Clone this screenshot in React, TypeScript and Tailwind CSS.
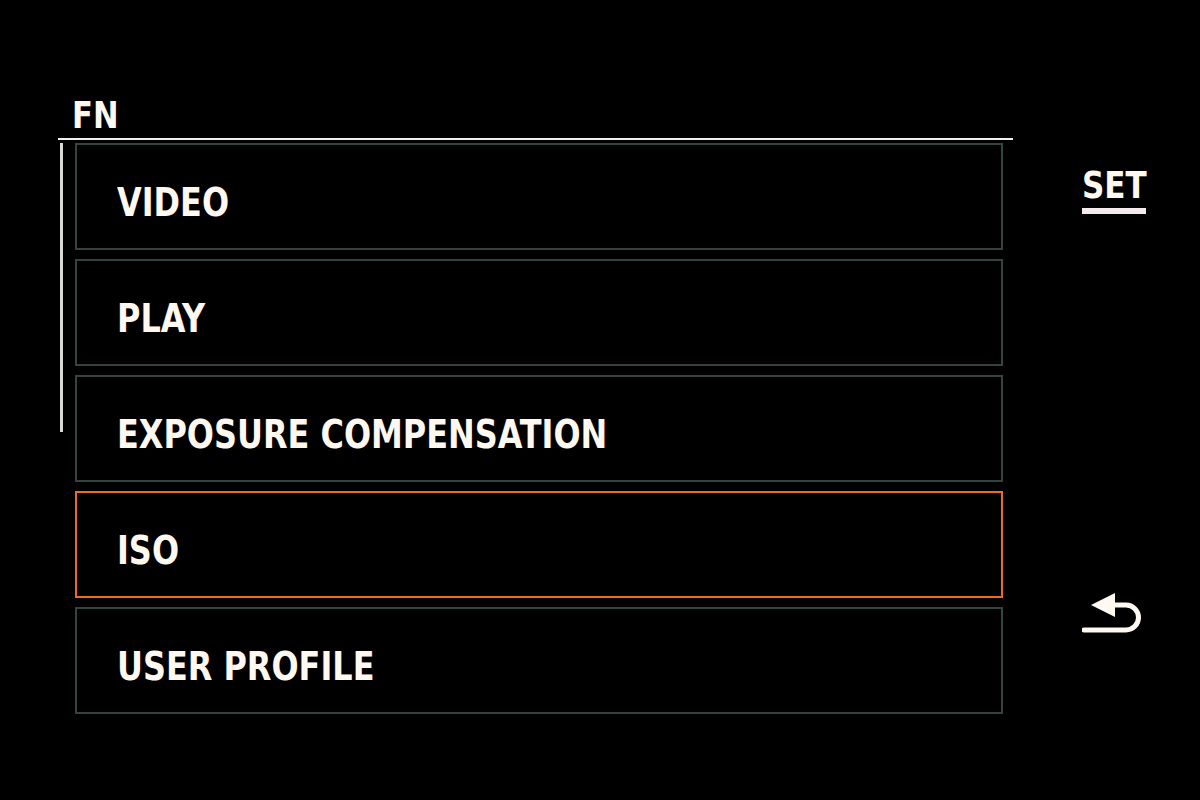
const items = [
  { label: "VIDEO", active: false },
  { label: "PLAY", active: false },
  { label: "EXPOSURE COMPENSATION", active: false },
  { label: "ISO", active: true },
  { label: "USER PROFILE", active: false },
];

function BackIcon() {
  return (
    <svg width="60" height="48" viewBox="0 0 60 48" fill="none">
      <path d="M9 12 L33 0 L33 24 Z" fill="#fff9f2" />
      <path d="M30 12 H44 A12.5 12.5 0 0 1 44 37 H2" stroke="#fff9f2" strokeWidth="5" strokeLinecap="round" />
    </svg>
  );
}

export default function App() {
  return (
    <div className="w-[1200px] h-[800px] bg-black flex overflow-hidden font-['DejaVu_Sans_Condensed','DejaVu_Sans',sans-serif] font-bold text-[#fff8f0]">
      <div className="ml-[58px] w-[955px] pt-[94px]">
        <div className="pl-[14px] text-[34px] leading-[42px]">
          <span className="inline-block scale-y-[1.12]">FN</span>
        </div>
        <div className="h-[2px] bg-[#eef2ee] mt-[2px]" />
        <div className="flex mt-[3px]">
          <div className="ml-[2px] w-[3px] h-[289px] bg-[#d8d8d4]" />
          <div className="ml-[12px] w-[928px] flex flex-col gap-[9px]">
            {items.map((item) => (
              <div
                key={item.label}
                className={`h-[107px] border-2 flex items-center pl-[40px] pt-[13px] text-[35.5px] ${
                  item.active ? "border-[#f06a1c]" : "border-[#34443e]"
                }`}
              >
                <span className="inline-block scale-y-[1.12]">{item.label}</span>
              </div>
            ))}
          </div>
        </div>
      </div>
      <div className="ml-[69px] pt-[165px] flex flex-col">
        <div className="text-[34.5px] leading-[40px]">
          <span className="inline-block scale-y-[1.08]">SET</span>
        </div>
        <div className="h-[6px] w-[64px] bg-[#f4eaf0] mt-[3px]" />
        <div className="mt-[379px]">
          <BackIcon />
        </div>
      </div>
    </div>
  );
}
